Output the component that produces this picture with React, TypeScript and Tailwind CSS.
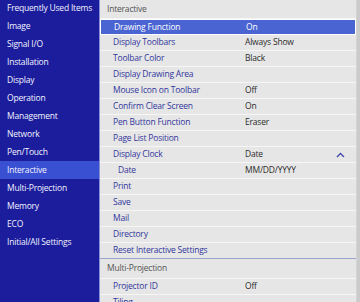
import React from 'react';

const menu = [
  'Frequently Used Items',
  'Image',
  'Signal I/O',
  'Installation',
  'Display',
  'Operation',
  'Management',
  'Network',
  'Pen/Touch',
  'Interactive',
  'Multi-Projection',
  'Memory',
  'ECO',
  'Initial/All Settings',
];

type Row = {label: string; value?: string; sub?: boolean; open?: boolean; selected?: boolean};

const interactive: Row[] = [
  {label: 'Drawing Function', value: 'On', selected: true},
  {label: 'Display Toolbars', value: 'Always Show'},
  {label: 'Toolbar Color', value: 'Black'},
  {label: 'Display Drawing Area'},
  {label: 'Mouse Icon on Toolbar', value: 'Off'},
  {label: 'Confirm Clear Screen', value: 'On'},
  {label: 'Pen Button Function', value: 'Eraser'},
  {label: 'Page List Position'},
  {label: 'Display Clock', value: 'Date', open: true},
  {label: 'Date', value: 'MM/DD/YYYY', sub: true},
  {label: 'Print'},
  {label: 'Save'},
  {label: 'Mail'},
  {label: 'Directory'},
  {label: 'Reset Interactive Settings'},
];

const multi: Row[] = [
  {label: 'Projector ID', value: 'Off'},
  {label: 'Tiling'},
];

function SettingRow({row, last}: {row: Row; last?: boolean}) {
  return (
    <div
      className={`relative flex h-[16px] shrink-0 items-center whitespace-nowrap ${
        row.selected
          ? 'border border-white bg-[#4a64d2] text-white'
          : last
            ? 'border-b border-[#9aa4cc]'
            : 'border-b border-[#f6f6f6]'
      }`}
    >
      <span
        className={`w-[145px] shrink-0 ${row.sub ? 'pl-[18px]' : 'pl-[13px]'} ${
          row.selected ? 'text-white' : 'text-[#32369c]'
        }`}
      >
        {row.label}
      </span>
      <span className={row.selected ? 'text-white' : 'text-[#2c2c2c]'}>{row.value}</span>
      {row.open && (
        <svg className="absolute right-[11px] top-[5px]" width="9" height="6" viewBox="0 0 9 6">
          <path d="M1 5 L4.5 1.5 L8 5" fill="none" stroke="#4046a8" strokeWidth="1.3" />
        </svg>
      )}
    </div>
  );
}

export default function App() {
  return (
    <div
      className="flex h-[302px] w-[360px] overflow-hidden text-[8.5px] font-medium leading-none tracking-[-0.2px]"
      style={{fontFamily: '"Open Sans", "Noto Sans", sans-serif'}}
    >
      <div className="flex w-[99px] shrink-0 flex-col bg-[#1b1d9c]">
        {menu.map((m, i) => (
          <div
            key={m}
            className={`flex shrink-0 items-center whitespace-nowrap pl-[7px] text-[#f2f2ff] ${
              i === 0 ? 'h-[17px]' : 'h-[18px]'
            } ${m === 'Interactive' ? 'bg-[#3a50d2]' : ''}`}
          >
            {m}
          </div>
        ))}
      </div>
      <div className="flex flex-1 border-l border-[#8a90d8] bg-[#e6e6e6]">
        <div className="flex flex-1 flex-col">
          <div className="flex h-[19px] shrink-0 items-center border-b border-[#f6f6f6] pl-[7px] text-[#555]">
            Interactive
          </div>
          {interactive.map((r, i) => (
            <SettingRow key={r.label} row={r} last={i === interactive.length - 1} />
          ))}
          <div className="flex h-[20px] shrink-0 items-center border-b border-[#f6f6f6] pl-[7px] text-[#555]">
            Multi-Projection
          </div>
          {multi.map((r) => (
            <SettingRow key={r.label} row={r} />
          ))}
        </div>
        <div className="w-[4px] shrink-0 border-l border-[#d4d4d4] bg-[#cbcbcb]" />
      </div>
    </div>
  );
}
